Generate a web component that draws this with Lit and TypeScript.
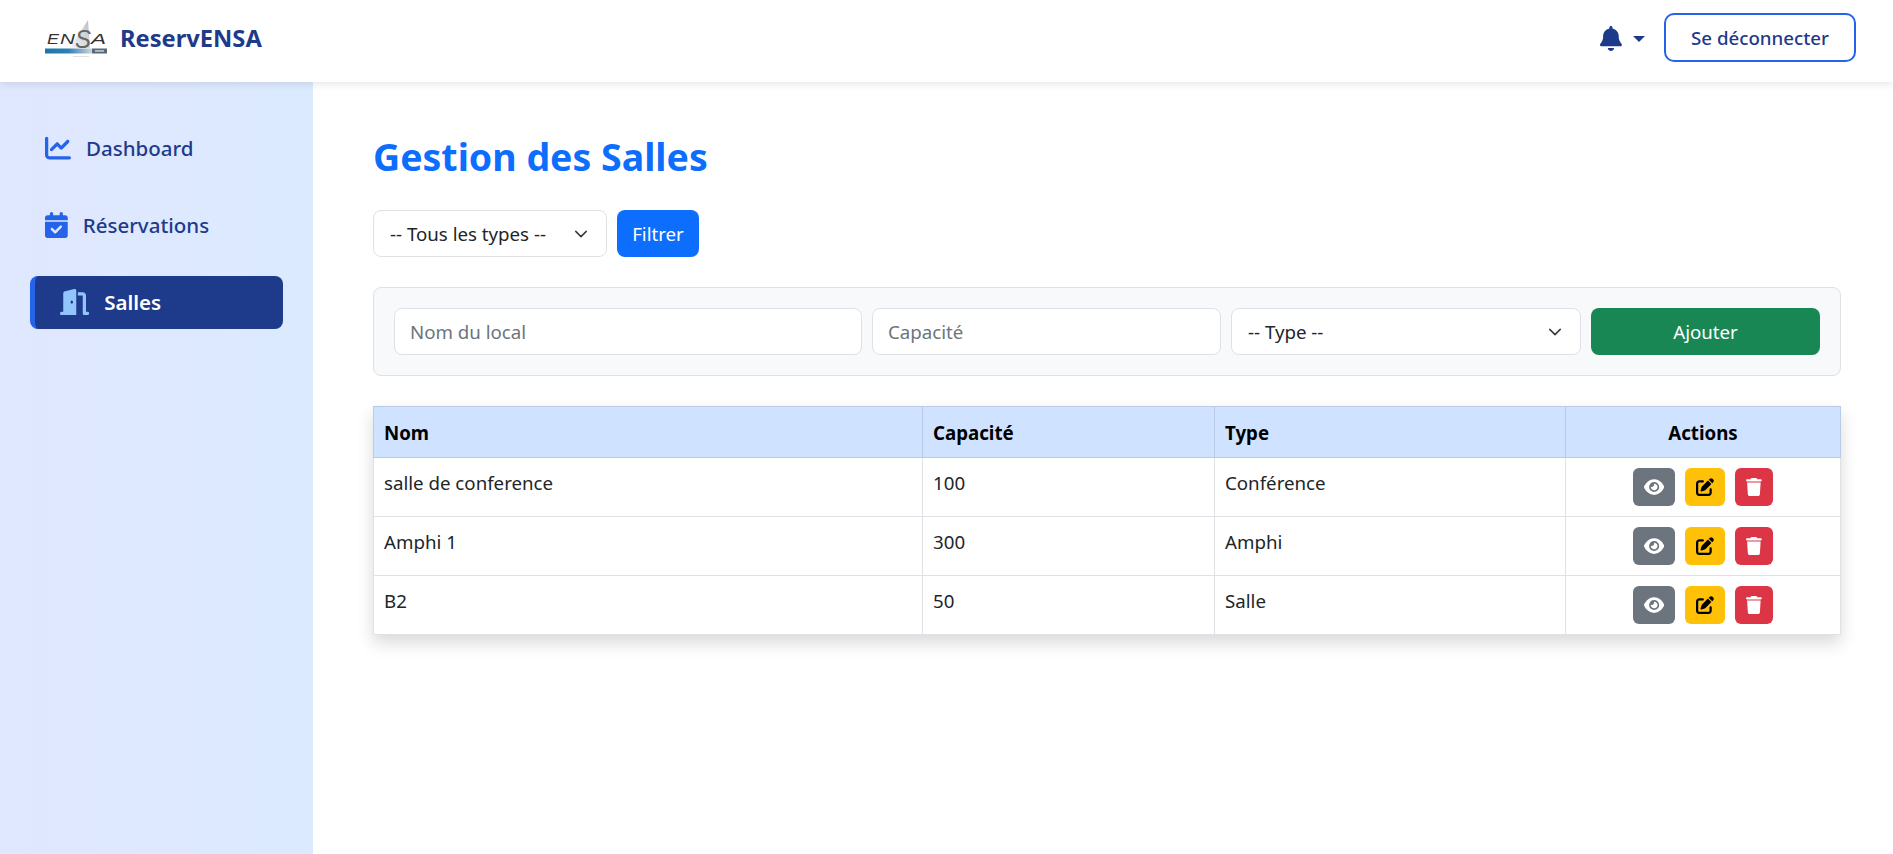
import { LitElement, html, css, svg } from 'lit';
import { customElement } from 'lit/decorators.js';

const ICONS = {
  chart: { vb: '0 0 512 512', d: 'M64 64c0-17.7-14.3-32-32-32S0 46.3 0 64V400c0 44.2 35.8 80 80 80H480c17.7 0 32-14.3 32-32s-14.3-32-32-32H80c-8.8 0-16-7.2-16-16V64zm406.6 86.6c12.5-12.5 12.5-32.8 0-45.3s-32.8-12.5-45.3 0L320 210.7l-57.4-57.4c-12.5-12.5-32.8-12.5-45.3 0l-112 112c-12.5 12.5-12.5 32.8 0 45.3s32.8 12.5 45.3 0L240 221.3l57.4 57.4c12.5 12.5 32.8 12.5 45.3 0l128-128z' },
  calendar: { vb: '0 0 448 512', d: 'M128 0c17.7 0 32 14.3 32 32V64H288V32c0-17.7 14.3-32 32-32s32 14.3 32 32V64h48c26.5 0 48 21.5 48 48v48H0V112C0 85.5 21.5 64 48 64H96V32c0-17.7 14.3-32 32-32zM0 192H448V464c0 26.5-21.5 48-48 48H48c-26.5 0-48-21.5-48-48V192zM329 305c9.4-9.4 9.4-24.6 0-33.9s-24.6-9.4-33.9 0l-95 95-47-47c-9.4-9.4-24.6-9.4-33.9 0s-9.4 24.6 0 33.9l64 64c9.4 9.4 24.6 9.4 33.9 0L329 305z' },
  door: { vb: '0 0 576 512', d: 'M320 32c0-9.9-4.5-19.2-12.3-25.2S289.8-1.4 280.2 .9l-179.9 45C79 51.3 64 70.5 64 92.5V448H32c-17.7 0-32 14.3-32 32s14.3 32 32 32H96 288h32V480 32zM256 256c0 17.7-10.7 32-24 32s-24-14.3-24-32s10.7-32 24-32s24 14.3 24 32zm96-128h96V480c0 17.7 14.3 32 32 32h64c17.7 0 32-14.3 32-32s-14.3-32-32-32H512V128c0-35.3-28.7-64-64-64H352v64z' },
  bell: { vb: '0 0 448 512', d: 'M224 0c-17.7 0-32 14.3-32 32V51.2C119 66 64 130.6 64 208v18.8c0 47-17.3 92.4-48.5 127.6l-7.4 8.3c-8.4 9.4-10.4 22.9-5.3 34.4S19.4 416 32 416H416c12.6 0 24-7.4 29.2-18.9s3.1-25-5.3-34.4l-7.4-8.3C401.3 319.2 384 273.9 384 226.8V208c0-77.4-55-142-128-156.8V32c0-17.7-14.3-32-32-32zm45.3 493.3c12-12 18.7-28.3 18.7-45.3H224 160c0 17 6.7 33.3 18.7 45.3s28.3 18.7 45.3 18.7s33.3-6.7 45.3-18.7z' },
  eye: { vb: '0 0 576 512', d: 'M288 32c-80.8 0-145.5 36.8-192.6 80.6C48.6 156 17.3 208 2.5 243.7c-3.3 7.9-3.3 16.7 0 24.6C17.3 304 48.6 356 95.4 399.4C142.5 443.2 207.2 480 288 480s145.5-36.8 192.6-80.6c46.8-43.5 78.1-95.4 93-131.1c3.3-7.9 3.3-16.7 0-24.6c-14.9-35.7-46.2-87.7-93-131.1C433.5 68.8 368.8 32 288 32zM144 256a144 144 0 1 1 288 0 144 144 0 1 1 -288 0zm144-64c0 35.3-28.7 64-64 64c-7.1 0-13.9-1.2-20.3-3.3c-5.5-1.8-11.9 1.6-11.7 7.4c.3 6.9 1.3 13.8 3.2 20.7c13.7 51.2 66.4 81.6 117.6 67.9s81.6-66.4 67.9-117.6c-11.1-41.5-47.8-69.4-88.6-71.1c-5.8-.2-9.2 6.1-7.4 11.7c2.1 6.4 3.3 13.2 3.3 20.3z' },
  pen: { vb: '0 0 512 512', d: 'M471.6 21.7c-21.9-21.9-57.3-21.9-79.2 0L362.3 51.7l97.9 97.9 30.1-30.1c21.9-21.9 21.9-57.3 0-79.2L471.6 21.7zm-299.2 220c-6.1 6.1-10.8 13.6-13.5 21.9l-29.6 88.8c-2.9 8.6-.6 18.1 5.8 24.6s15.9 8.7 24.6 5.8l88.8-29.6c8.2-2.7 15.7-7.4 21.9-13.5L437.7 172.3 339.7 74.3 172.4 241.7zM96 64C43 64 0 107 0 160V416c0 53 43 96 96 96H352c53 0 96-43 96-96V320c0-17.7-14.3-32-32-32s-32 14.3-32 32v96c0 17.7-14.3 32-32 32H96c-17.7 0-32-14.3-32-32V160c0-17.7 14.3-32 32-32h96c17.7 0 32-14.3 32-32s-14.3-32-32-32H96z' },
  trash: { vb: '0 0 448 512', d: 'M135.2 17.7L128 32H32C14.3 32 0 46.3 0 64S14.3 96 32 96H416c17.7 0 32-14.3 32-32s-14.3-32-32-32H320l-7.2-14.3C307.4 6.8 296.3 0 284.2 0H163.8c-12.1 0-23.2 6.8-28.6 17.7zM416 128H32L53.2 467c1.6 25.3 22.6 45 47.9 45H346.9c25.3 0 46.3-19.7 47.9-45L416 128z' },
};

type IconName = keyof typeof ICONS;

const icon = (name: IconName) =>
  html`<svg class="ico" viewBox=${ICONS[name].vb} fill="currentColor"><path d=${ICONS[name].d}></path></svg>`;

const ROOMS = [
  { name: 'salle de conference', capacity: 100, type: 'Conférence' },
  { name: 'Amphi 1', capacity: 300, type: 'Amphi' },
  { name: 'B2', capacity: 50, type: 'Salle' },
];

@customElement('app-root')
export class AppRoot extends LitElement {
  static styles = css`
    :host {
      display: flex;
      flex-direction: column;
      height: 854px;
      overflow: hidden;
      font-family: "Noto Sans", "Open Sans", sans-serif;
      font-size: 18.7px;
      color: #212529;
      background: #fff;
    }
    * { box-sizing: border-box; }
    .ico { height: 1em; display: block; flex: none; }

    /* Top bar */
    .topbar {
      position: relative;
      z-index: 2;
      height: 82px;
      flex: none;
      display: flex;
      align-items: center;
      justify-content: space-between;
      padding: 0 37px 7px 45px;
      background: #fff;
      box-shadow: 0 2px 8px rgba(0, 0, 0, 0.1);
    }
    .brand { display: flex; align-items: center; gap: 13px; }
    .logo { width: 62px; height: 38px; display: block; }
    .brand-name { font-size: 23.7px; font-weight: 700; color: #1e3a8a; }
    .top-actions { display: flex; align-items: center; }
    .bell { display: flex; align-items: center; gap: 11px; color: #1e3a8a; font-size: 25px; margin-right: 19px; padding-top: 2px; }
    .caret {
      width: 0;
      height: 0;
      border-left: 6px solid transparent;
      border-right: 6px solid transparent;
      border-top: 6px solid #1e3a8a;
    }
    .logout {
      width: 192px;
      height: 49px;
      border: 2px solid #2563eb;
      border-radius: 10px;
      background: #fff;
      color: #1e3a8a;
      font: 500 18.7px "Noto Sans", sans-serif;
    }

    /* Shell */
    .shell { flex: 1; display: flex; min-height: 0; }
    .sidebar {
      width: 313px;
      flex: none;
      padding: 40px 30px;
      display: flex;
      flex-direction: column;
      gap: 24px;
      background: linear-gradient(90deg, #e0e7ff, #dbeafe);
    }
    .nav-item {
      height: 53px;
      display: flex;
      align-items: center;
      gap: 15px;
      padding-left: 15px;
      padding-bottom: 2px;
      border-radius: 8px;
      color: #1e3a8a;
      font-size: 20.5px;
      font-weight: 500;
    }
    .nav-item .ico { font-size: 26px; color: #2563eb; }
    .nav-item.active {
      padding-left: 25px;
      background: #1e3a8a;
      color: #fff;
      font-weight: 600;
      border-left: 5px solid #2563eb;
    }
    .nav-item.active .ico { color: #93c5fd; }

    /* Content */
    .content { flex: 1; padding: 50px 52px 0 60px; min-width: 0; }
    h1 {
      margin: 0 0 28px;
      font-size: 37.5px;
      line-height: 50px;
      font-weight: 700;
      color: #0d6efd;
    }
    .field {
      height: 47px;
      border: 1px solid #dee2e6;
      border-radius: 8px;
      background-color: #fff;
      color: #212529;
      font: 400 18.7px "Noto Sans", sans-serif;
      padding: 0 15px;
      outline: none;
      width: 100%;
      min-width: 0;
    }
    .field::placeholder { color: #6c757d; opacity: 1; }
    select.field {
      appearance: none;
      padding: 0 16px;
      background-image: url("data:image/svg+xml,%3csvg xmlns='http://www.w3.org/2000/svg' viewBox='0 0 16 16'%3e%3cpath fill='none' stroke='%23343a40' stroke-linecap='round' stroke-linejoin='round' stroke-width='1.7' d='m2 5 6 6 6-6'/%3e%3c/svg%3e");
      background-repeat: no-repeat;
      background-position: right 16px center;
      background-size: 18px 14px;
    }
    .filter { display: flex; gap: 10px; margin-bottom: 30px; }
    .filter select { width: 234px; }
    .btn {
      height: 47px;
      border: none;
      border-radius: 8px;
      color: #fff;
      font: 400 18.7px "Noto Sans", sans-serif;
    }
    .btn-blue { width: 82px; background: #0d6efd; }
    .btn-green { background: #198754; }
    .add-card {
      display: grid;
      grid-template-columns: 468px 349px 350px 1fr;
      gap: 10px;
      padding: 20px;
      margin-bottom: 30px;
      height: 89px;
      background: #f8f9fa;
      border: 1px solid #dee2e6;
      border-radius: 8px;
    }

    /* Table */
    table {
      width: 100%;
      table-layout: fixed;
      border-collapse: collapse;
      box-shadow: 0 8px 16px rgba(0, 0, 0, 0.15);
    }
    .col-name { width: 549px; }
    .col-cap { width: 292px; }
    .col-type { width: 351px; }
    th, td { border: 1px solid #dee2e6; padding: 0 10px; text-align: left; }
    th {
      height: 51px;
      background: #cfe2ff;
      border-color: #bacbe6;
      color: #000;
      font-weight: 700;
    }
    td { height: 59px; padding-bottom: 10px; }
    th.center { text-align: center; }
    td.actions { padding-bottom: 0; }
    .actions-row { display: flex; justify-content: center; gap: 10px; }
    .act {
      height: 38px;
      padding: 0 11px;
      display: flex;
      align-items: center;
      border: none;
      border-radius: 6px;
      font-size: 18px;
    }
    .act-view { background: #6c757d; color: #fff; }
    .act-edit { background: #ffc107; color: #000; }
    .act-del { background: #dc3545; color: #fff; }
  `;

  private logo() {
    return html`<svg class="logo" viewBox="0 0 62 38">
      <defs>
        <linearGradient id="bar" x1="0" x2="1" y1="0" y2="0">
          <stop offset="0" stop-color="#1b75ad"></stop>
          <stop offset="0.5" stop-color="#2f80b4"></stop>
          <stop offset="1" stop-color="#cfd6db"></stop>
        </linearGradient>
        <linearGradient id="peak" x1="0" x2="1" y1="1" y2="0">
          <stop offset="0" stop-color="#f4f5f6"></stop>
          <stop offset="1" stop-color="#b9bec3"></stop>
        </linearGradient>
      </defs>
      ${svg`<path d="M25 29 L43 1 L45 29 Z" fill="url(#peak)"></path>`}
      <g font-family="Liberation Sans" font-style="italic" fill="#333">
        <text x="2" y="24.5" font-size="15" textLength="12" lengthAdjust="spacingAndGlyphs">E</text>
        <text x="15" y="24.5" font-size="15" textLength="15" lengthAdjust="spacingAndGlyphs">N</text>
        <text x="30" y="29" font-size="26" textLength="16" lengthAdjust="spacingAndGlyphs" fill="#666">S</text>
        <text x="46" y="24.5" font-size="15" textLength="15" lengthAdjust="spacingAndGlyphs">A</text>
      </g>
      <rect x="0" y="29.5" width="47" height="5" fill="url(#bar)"></rect>
      <rect x="47" y="29.5" width="15" height="5" fill="#56687a"></rect>
      <rect x="50" y="31.2" width="9" height="1.5" fill="#c7ced4"></rect>
      <rect x="28" y="37" width="16" height="1" fill="#dfe2e4"></rect>
    </svg>`;
  }

  render() {
    return html`
      <header class="topbar">
        <div class="brand">${this.logo()}<span class="brand-name">ReservENSA</span></div>
        <div class="top-actions">
          <div class="bell">${icon('bell')}<span class="caret"></span></div>
          <button class="logout">Se déconnecter</button>
        </div>
      </header>
      <div class="shell">
        <nav class="sidebar">
          <div class="nav-item">${icon('chart')}<span>Dashboard</span></div>
          <div class="nav-item">${icon('calendar')}<span>Réservations</span></div>
          <div class="nav-item active">${icon('door')}<span>Salles</span></div>
        </nav>
        <main class="content">
          <h1>Gestion des Salles</h1>
          <div class="filter">
            <select class="field"><option>-- Tous les types --</option></select>
            <button class="btn btn-blue">Filtrer</button>
          </div>
          <div class="add-card">
            <input class="field" placeholder="Nom du local" />
            <input class="field" placeholder="Capacité" />
            <select class="field"><option>-- Type --</option></select>
            <button class="btn btn-green">Ajouter</button>
          </div>
          <table>
            <colgroup>
              <col class="col-name" /><col class="col-cap" /><col class="col-type" /><col />
            </colgroup>
            <thead>
              <tr><th>Nom</th><th>Capacité</th><th>Type</th><th class="center">Actions</th></tr>
            </thead>
            <tbody>
              ${ROOMS.map(
                (r) => html`<tr>
                  <td>${r.name}</td>
                  <td>${r.capacity}</td>
                  <td>${r.type}</td>
                  <td class="actions">
                    <div class="actions-row">
                      <button class="act act-view">${icon('eye')}</button>
                      <button class="act act-edit">${icon('pen')}</button>
                      <button class="act act-del">${icon('trash')}</button>
                    </div>
                  </td>
                </tr>`
              )}
            </tbody>
          </table>
        </main>
      </div>
    `;
  }
}
